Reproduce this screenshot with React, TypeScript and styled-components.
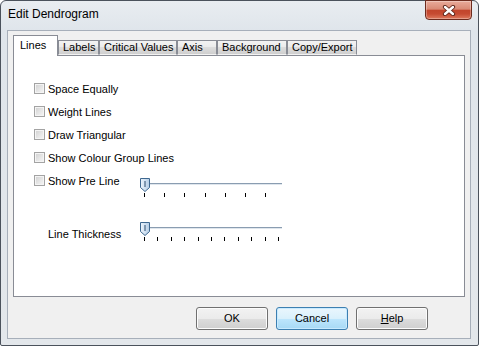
import React from 'react'
import styled, { createGlobalStyle } from 'styled-components'

const GlobalStyle = createGlobalStyle`
  html, body { margin: 0; padding: 0; background: #fff; }
  body {
    font-family: "Liberation Sans", Arial, sans-serif;
    font-size: 11px;
    color: #000;
  }
  * { box-sizing: border-box; }
`

const Window = styled.div`
  width: 479px;
  height: 346px;
  border: 1px solid #4b525c;
  border-radius: 6px 6px 2px 2px;
  background: linear-gradient(180deg, #e9edf1 0%, #dfe5eb 30px, #e3e7eb 100%);
  padding: 0 7px 6px 6px;
  display: flex;
  flex-direction: column;
`

const TitleBar = styled.div`
  height: 29px;
  display: flex;
  align-items: flex-start;
  justify-content: space-between;
  padding-left: 1px;
`

const Title = styled.div`
  font-size: 12px;
  line-height: 14px;
  margin-top: 6px;
`

const CloseButton = styled.div`
  width: 47px;
  height: 20px;
  margin-top: -1px;
  margin-right: -1px;
  border: 1px solid #6d2b1e;
  border-radius: 0 0 4px 4px;
  background: linear-gradient(180deg, #e9ab9b 0%, #d98a75 45%, #c2452c 52%, #c64b32 72%, #de7a5e 100%);
  box-shadow: inset 0 0 0 1px rgba(255, 255, 255, 0.3);
  display: flex;
  align-items: center;
  justify-content: center;
`

const Client = styled.div`
  flex: 1;
  background: #f0f0f0;
  border: 1px solid #a7afba;
  padding: 4px 5px 0 5px;
  display: flex;
  flex-direction: column;
`

const TabRow = styled.div`
  height: 20px;
  display: flex;
  align-items: flex-end;
  position: relative;
  z-index: 1;
`

const Tab = styled.div<{ $active?: boolean; $width: number }>`
  width: ${p => p.$width}px;
  height: ${p => (p.$active ? '21px' : '15px')};
  margin-bottom: ${p => (p.$active ? '-1px' : '0')};
  padding: ${p => (p.$active ? '3px 0 0 6px' : '0 0 0 4px')};
  border: 1px solid #898c95;
  border-bottom: ${p => (p.$active ? 'none' : '1px solid transparent')};
  background: ${p =>
    p.$active ? '#fff' : 'linear-gradient(180deg, #f3f3f3 0%, #ebebeb 50%, #dddddd 50%, #cfcfcf 100%)'};
  line-height: 13px;
  white-space: nowrap;
`

const Panel = styled.div`
  height: 242px;
  border: 1px solid #898c95;
  background: #fff;
  padding: 21px 0 0 20px;
`

const CheckRow = styled.div<{ $width?: number }>`
  height: 23px;
  display: flex;
  align-items: center;
  width: ${p => (p.$width ? `${p.$width}px` : 'auto')};
`

const Checkbox = styled.span`
  width: 11px;
  height: 11px;
  margin-right: 3px;
  border: 1px solid #a3a3a3;
  background: linear-gradient(135deg, #cfcfcf 0%, #e6e6e6 55%, #f6f6f6 100%);
  box-shadow: inset 0 0 0 1px #f4f4f4;
`

const SliderLine = styled.div<{ $top?: number; $indent?: number }>`
  display: flex;
  align-items: flex-start;
  margin-top: ${p => p.$top ?? 0}px;
  padding-left: ${p => p.$indent ?? 0}px;
`

const SliderLabel = styled.div`
  width: 92px;
  margin-top: 15px;
  line-height: 13px;
`

const SliderBox = styled.div`
  margin-top: 9px;
  width: 145px;
  height: 20px;
`

const ButtonRow = styled.div`
  flex: 1;
  display: flex;
  justify-content: flex-end;
  align-items: flex-start;
  gap: 8px;
  padding: 10px 37px 0 0;
`

const Button = styled.div<{ $focused?: boolean }>`
  width: 72px;
  height: 23px;
  border: 1px solid ${p => (p.$focused ? '#3c7fb1' : '#707070')};
  border-radius: 3px;
  background: ${p =>
    p.$focused
      ? 'linear-gradient(180deg, #eaf6fd 0%, #d9f0fc 50%, #bee6fd 50%, #a7d9f5 100%)'
      : 'linear-gradient(180deg, #f2f2f2 0%, #ebebeb 50%, #dddddd 50%, #cfcfcf 100%)'};
  box-shadow: inset 0 0 0 1px ${p => (p.$focused ? '#c8eaff' : '#fcfcfc')};
  display: flex;
  align-items: center;
  justify-content: center;
  line-height: 13px;
`

const Underlined = styled.span`
  text-decoration: underline;
`

const CloseGlyph = () => (
  <svg width="14" height="11" viewBox="0 0 14 11">
    <path d="M3 2 L11 9 M11 2 L3 9" stroke="#5a2318" strokeWidth="4.2" strokeLinecap="round" />
    <path d="M3 2 L11 9 M11 2 L3 9" stroke="#ffffff" strokeWidth="2.4" strokeLinecap="round" />
  </svg>
)

const Slider = ({ ticks }: { ticks: number[] }) => (
  <SliderBox>
    <svg width="145" height="20" viewBox="0 0 145 20">
      <defs>
        <linearGradient id="thumb" x1="0" y1="0" x2="1" y2="0">
          <stop offset="0" stopColor="#eef5fc" />
          <stop offset="1" stopColor="#b4cde6" />
        </linearGradient>
      </defs>
      <line x1="6" y1="5.5" x2="142" y2="5.5" stroke="#8a9db1" />
      <line x1="6" y1="6.5" x2="142" y2="6.5" stroke="#dfe6ed" />
      {ticks.map(x => (
        <line key={x} x1={x + 0.5} y1="15" x2={x + 0.5} y2="19" stroke="#000" />
      ))}
      <path d="M0.5 0.5 H9.5 V9.5 L5 13.5 L0.5 9.5 Z" fill="url(#thumb)" stroke="#3e6890" />
      <line x1="5" y1="3" x2="5" y2="9" stroke="#2c4c6e" />
    </svg>
  </SliderBox>
)

const checks = ['Space Equally', 'Weight Lines', 'Draw Triangular', 'Show Colour Group Lines']
const tabs: [string, number][] = [
  ['Labels', 41],
  ['Critical Values', 78],
  ['Axis', 40],
  ['Background', 70],
  ['Copy/Export', 70],
]

const preTicks = [4, 24, 44, 65, 85, 105, 125]
const thickTicks = Array.from({ length: 11 }, (_, i) => Math.round(4 + i * 13.4))

export default function App() {
  return (
    <>
      <GlobalStyle />
      <Window>
        <TitleBar>
          <Title>Edit Dendrogram</Title>
          <CloseButton>
            <CloseGlyph />
          </CloseButton>
        </TitleBar>
        <Client>
          <TabRow>
            <Tab $active $width={45}>Lines</Tab>
            {tabs.map(([t, w]) => (
              <Tab key={t} $width={w}>{t}</Tab>
            ))}
          </TabRow>
          <Panel>
            {checks.map(c => (
              <CheckRow key={c}>
                <Checkbox />
                {c}
              </CheckRow>
            ))}
            <SliderLine>
              <CheckRow $width={106}>
                <Checkbox />
                Show Pre Line
              </CheckRow>
              <Slider ticks={preTicks} />
            </SliderLine>
            <SliderLine $top={15} $indent={14}>
              <SliderLabel>Line Thickness</SliderLabel>
              <Slider ticks={thickTicks} />
            </SliderLine>
          </Panel>
          <ButtonRow>
            <Button>OK</Button>
            <Button $focused>Cancel</Button>
            <Button>
              <Underlined>H</Underlined>elp
            </Button>
          </ButtonRow>
        </Client>
      </Window>
    </>
  )
}
